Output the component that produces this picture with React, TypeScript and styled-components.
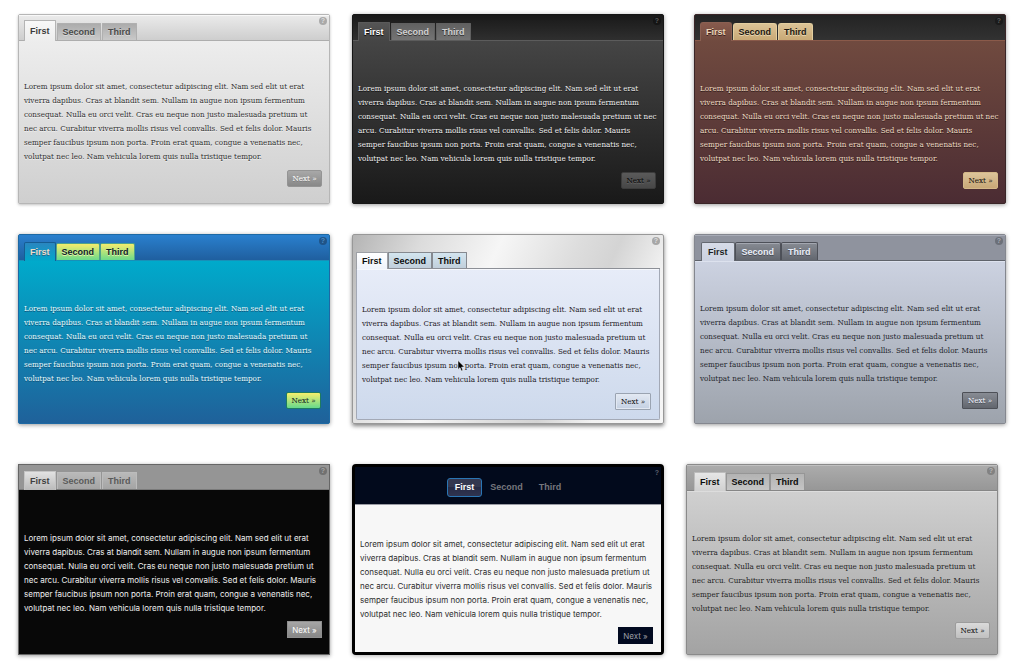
import React, { Fragment, useState } from "react";
import styled, { createGlobalStyle, css } from "styled-components";

const SERIF = `8px/14px "DejaVu Serif Condensed", Georgia, serif`;
const SANS = `8px/14px Inter, Arial, sans-serif`;
const LABEL = `"Liberation Sans", Arial, sans-serif`;

interface Skin {
  name: string;
  frame: string;
  frameBorder: string;
  frameWidth?: number;
  framePad?: number;
  radius: number;
  shadow: string;
  header: string;
  headerHeight: number;
  headerLine: string;
  headerInset?: string;
  centered?: boolean;
  body: string;
  bodyFrame?: string;
  bodyInset?: string;
  bodyTop: number;
  bodySide: number;
  bodyEnd: number;
  bodyFont: string;
  text: string;
  textShadow?: string;
  wide?: boolean;
  tabsStart: number;
  tabGap: number;
  tabPad: number;
  tab: string;
  tabBorder: string;
  tabText: string;
  tabShadow?: string;
  tabInset?: string;
  tabRadius: number;
  tabHeight: number;
  active: string;
  activeBorder: string;
  activeText: string;
  activeShadow?: string;
  activeInset?: string;
  activeHeight: number;
  overlap: number;
  button: string;
  buttonBorder: string;
  buttonText: string;
  buttonShadow?: string;
  buttonInset?: string;
  buttonRadius: number;
  buttonWidth: number;
  help: string;
  helpText: string;
  helpEnd: number;
}

const base = {
  radius: 2,
  shadow: "0 1px 4px rgba(0, 0, 0, 0.4)",
  headerHeight: 26,
  bodyTop: 41,
  bodySide: 5,
  bodyEnd: 7,
  bodyFont: SERIF,
  tabsStart: 5,
  tabGap: 0,
  tabPad: 5,
  tabRadius: 1,
  tabHeight: 17,
  activeHeight: 19,
  overlap: 1,
  buttonRadius: 2,
  buttonWidth: 35,
  helpEnd: 2,
};

const skins: Skin[][] = [
  [
    {
      ...base,
      name: "Silver",
      shadow: "0 1px 3px rgba(0, 0, 0, 0.25)",
      frame: "#dddddd",
      frameBorder: "#b6b6b6",
      header: "linear-gradient(#ebebeb, #cecece)",
      headerLine: "#adadad",
      headerInset: "inset 0 1px 0 #f8f8f8",
      body: "linear-gradient(#ededed, #cfcfcf)",
      bodyTop: 39,
      text: "#303030",
      textShadow: "0 1px 0 rgba(255, 255, 255, 0.6)",
      tabGap: 1,
      tab: "linear-gradient(#acacac, #c9c9c9)",
      tabBorder: "#b0b0b0",
      tabText: "#4a4a4a",
      tabShadow: "0 1px 0 rgba(255, 255, 255, 0.4)",
      active: "linear-gradient(#f8f8f8, #ededed)",
      activeBorder: "#b4b4b4",
      activeText: "#3c3c3c",
      activeHeight: 21,
      button: "linear-gradient(#a8a8a8, #888888)",
      buttonBorder: "#949494",
      buttonText: "#ffffff",
      buttonShadow: "0 1px 0 rgba(0, 0, 0, 0.2)",
      help: "#a9a9a9",
      helpText: "#dedede",
    },
    {
      ...base,
      name: "Graphite",
      frame: "#222222",
      frameBorder: "#161616",
      header: "linear-gradient(#191919, #2f2f2f)",
      headerLine: "#5c5c5c",
      body: "linear-gradient(#454545, #191919)",
      text: "#f0f0f0",
      textShadow: "0 1px 0 #111111",
      wide: true,
      tabGap: 1,
      tab: "linear-gradient(#616161, #747474)",
      tabBorder: "#606060",
      tabText: "#d2d2d2",
      tabShadow: "0 1px 0 #333333",
      active: "linear-gradient(#555555, #454545)",
      activeBorder: "#5a5a5a",
      activeText: "#ffffff",
      activeShadow: "0 1px 1px #000000",
      button: "linear-gradient(#5a5a5a, #474747)",
      buttonBorder: "#3c3c3c",
      buttonText: "#060606",
      buttonShadow: "0 1px 0 #666666",
      help: "#151515",
      helpText: "#5a5a5a",
    },
    {
      ...base,
      name: "Mocha",
      frame: "#4b2c31",
      frameBorder: "#3a2527",
      header: "linear-gradient(#232323, #323232)",
      headerLine: "#8a5a4a",
      body: "linear-gradient(#704a3f, #4b2c33)",
      text: "#eeddc4",
      textShadow: "0 1px 0 #2e1a1a",
      wide: true,
      tabGap: 1,
      tabRadius: 3,
      tab: "linear-gradient(#dcc396, #c8a976)",
      tabBorder: "#e3ce9f",
      tabText: "#1c1610",
      tabShadow: "0 1px 0 #e8d8b5",
      active: "linear-gradient(#885b4d, #704a3f)",
      activeBorder: "#8a6052",
      activeText: "#ead6b8",
      activeShadow: "0 1px 0 #3a2020",
      button: "linear-gradient(#dcc49a, #c8a877)",
      buttonBorder: "#d4b888",
      buttonText: "#120e0a",
      help: "#1b1b1b",
      helpText: "#5c5c5c",
    },
  ],
  [
    {
      ...base,
      name: "Lagoon",
      frame: "#1e6399",
      frameBorder: "#1d69a4",
      header: "linear-gradient(#2a80ce, #1f5f9f)",
      headerLine: "#1890b8",
      body: "linear-gradient(#00aacb, #1f619a)",
      bodyEnd: 8,
      text: "#e8fafa",
      textShadow: "0 1px 0 #12557c",
      tabRadius: 2,
      tab: "linear-gradient(#f5ec6c, #6cda8a)",
      tabBorder: "#4fa18c",
      tabText: "#10222a",
      tabShadow: "0 1px 0 #e8f7b0",
      active: "linear-gradient(#2a86c0, #00a8ca)",
      activeBorder: "#165d92",
      activeText: "#f0dcc6",
      activeShadow: "0 1px 0 #22688c",
      button: "linear-gradient(#f6ef6c, #66d98c)",
      buttonBorder: "#1f7b60",
      buttonText: "#0a181e",
      help: "#1f5488",
      helpText: "#4d8cc4",
    },
    {
      ...base,
      name: "Brushed",
      frame:
        "linear-gradient(115deg, #b4b4b4 0%, #dcdcdc 18%, #f6f6f6 38%, #dddddd 58%, #d4d4d4 68%, #f2f2f2 82%, #f6f6f6 100%)",
      frameBorder: "#989898",
      framePad: 3,
      shadow: "0 2px 4px rgba(0, 0, 0, 0.5)",
      header: "transparent",
      headerHeight: 34,
      headerLine: "#8c8f96",
      body: "linear-gradient(#e7ecf8, #cdd9ec)",
      bodyFrame: "#a3a9b6",
      bodyInset: "inset 0 1px 0 #f6f8fd",
      bodyTop: 34,
      bodyEnd: 8,
      text: "#1e2026",
      tabsStart: 0,
      tabHeight: 16,
      activeHeight: 17,
      tab: "linear-gradient(#d3e5ef, #c1cfdb)",
      tabBorder: "#85898f",
      tabText: "#0c0c0c",
      active: "linear-gradient(#ffffff, #eff3fb)",
      activeBorder: "#9da0a6",
      activeText: "#0c0c0c",
      button: "linear-gradient(#e3e9f3, #c4d0e2)",
      buttonBorder: "#9aa3b1",
      buttonInset: "inset 0 0 0 1px #e2e8f2",
      buttonText: "#0c0c0c",
      buttonRadius: 1,
      buttonWidth: 36,
      help: "#a7a7a7",
      helpText: "#dedede",
      helpEnd: 0,
    },
    {
      ...base,
      name: "Slate",
      frame: "#a5abb5",
      frameBorder: "#84878f",
      header: "#8f939e",
      headerInset: "inset 0 1px 0 #a7abb6",
      headerLine: "#5f636b",
      body: "linear-gradient(#ccd2e1, #9da3ac)",
      bodyInset: "inset 0 1px 0 #dde2ee",
      text: "#24262c",
      tabsStart: 6,
      tabPad: 6,
      tabRadius: 2,
      tabHeight: 18,
      tab: "linear-gradient(#878b93, #63676f)",
      tabBorder: "#4d5058",
      tabText: "#e9eef8",
      tabShadow: "0 1px 0 #4a4d55",
      tabInset: "inset 0 1px 0 #a3a7b0",
      active: "linear-gradient(#d6dbe8, #ccd2e1)",
      activeBorder: "#646870",
      activeText: "#1c1e22",
      button: "linear-gradient(#888c94, #62666e)",
      buttonBorder: "#4d5057",
      buttonText: "#f2f6ff",
      buttonShadow: "0 1px 0 #4a4d55",
      buttonRadius: 1,
      buttonWidth: 36,
      help: "#6c7079",
      helpText: "#a4a8b2",
    },
  ],
  [
    {
      ...base,
      name: "Noir",
      radius: 0,
      frame: "#080808",
      frameBorder: "#666666",
      header: "#959595",
      headerHeight: 25,
      headerLine: "#7a7a7a",
      body: "#080808",
      bodyFont: SANS,
      text: "#f0f0f0",
      tabGap: 1,
      tabRadius: 0,
      tab: "linear-gradient(#b9b9b9, #a4a4a4)",
      tabBorder: "#bcbcbc",
      tabText: "#5a5a5a",
      active: "linear-gradient(#e2e2e2, #bababa)",
      activeBorder: "#c4c4c4",
      activeText: "#404040",
      button: "linear-gradient(#a6a6a6, #878787)",
      buttonBorder: "#8f8f8f",
      buttonText: "#ffffff",
      buttonRadius: 0,
      help: "#717171",
      helpText: "#a5a5a5",
    },
    {
      ...base,
      name: "Midnight",
      radius: 4,
      frame: "#020a1c",
      frameBorder: "#000000",
      frameWidth: 3,
      shadow: "0 1px 4px rgba(0, 0, 0, 0.3)",
      header: "#020a1c",
      headerHeight: 38,
      headerLine: "#9a9ca4",
      centered: true,
      body: "#f7f7f7",
      bodyTop: 32,
      bodyEnd: 8,
      bodyFont: SANS,
      text: "#2c2c2c",
      tabsStart: 0,
      tabPad: 7,
      tabRadius: 3,
      tab: "transparent",
      tabBorder: "transparent",
      tabText: "#76777d",
      tabHeight: 19,
      active: "linear-gradient(#343850 50%, #272b45 50%, #2f3450)",
      activeBorder: "#2a76b4",
      activeText: "#ffffff",
      overlap: 0,
      button: "#020a20",
      buttonBorder: "#020a20",
      buttonText: "#9c9ea4",
      buttonRadius: 0,
      help: "#020a1c",
      helpText: "#5c606c",
      helpEnd: 0,
    },
    {
      ...base,
      name: "Pewter",
      frame: "#aaaaaa",
      frameBorder: "#8a8a8a",
      header: "linear-gradient(#acacac, #979797)",
      headerInset: "inset 0 1px 0 #c0c0c0",
      headerLine: "#868686",
      body: "linear-gradient(#d0d0d0, #a3a3a3)",
      bodyInset: "inset 0 1px 0 #dddddd",
      text: "#242424",
      tabsStart: 7,
      tab: "linear-gradient(#b3b3b3, #c5c5c5)",
      tabBorder: "#969696",
      tabText: "#0c0c0c",
      active: "linear-gradient(#e6e6e6, #d0d0d0)",
      activeBorder: "#bdbdbd",
      activeText: "#0c0c0c",
      button: "linear-gradient(#dadada, #c0c0c0)",
      buttonBorder: "#9c9c9c",
      buttonText: "#0c0c0c",
      help: "#828282",
      helpText: "#b5b5b5",
    },
  ],
];

const Global = createGlobalStyle`
  * { box-sizing: border-box; }
  body { margin: 0; background: #ffffff; }
  button { margin: 0; cursor: pointer; }
`;

const Gallery = styled.main`
  display: flex;
  flex-direction: column;
  gap: 30px;
  padding: 14px 18px 12px;
`;

const Row = styled.div<{ $last: boolean }>`
  display: grid;
  grid-template-columns: repeat(3, minmax(0, 1fr));
  column-gap: 22px;
  padding-right: 8px;
  padding-top: ${(p) => (p.$last ? 10 : 0)}px;

  & > :last-child {
    margin: 0 ${(p) => (p.$last ? 0 : -8)}px 0 ${(p) => (p.$last ? 0 : 8)}px;
  }
`;

const Panel = styled.section<{ $s: Skin }>`
  position: relative;
  min-height: 190px;
  display: flex;
  flex-direction: column;
  padding: 0 ${(p) => p.$s.framePad ?? 0}px ${(p) => p.$s.framePad ?? 0}px;
  border: ${(p) => p.$s.frameWidth ?? 1}px solid ${(p) => p.$s.frameBorder};
  border-radius: ${(p) => p.$s.radius}px;
  background: ${(p) => p.$s.frame};
  box-shadow: ${(p) => p.$s.shadow};
`;

const Header = styled.header<{ $s: Skin }>`
  display: flex;
  align-items: flex-end;
  height: ${(p) => p.$s.headerHeight}px;
  background: ${(p) => p.$s.header};
  border-bottom: 1px solid ${(p) => p.$s.headerLine};
  box-shadow: ${(p) => p.$s.headerInset ?? "none"};
`;

const TabList = styled.div<{ $s: Skin }>`
  display: flex;
  gap: ${(p) => p.$s.tabGap}px;
  ${(p) =>
    p.$s.centered
      ? css`
          flex: 1;
          align-self: center;
          align-items: center;
          justify-content: center;
          padding: 3px 0 0 8px;
        `
      : css`
          align-items: flex-end;
          padding-left: ${p.$s.tabsStart}px;
        `}
`;

const Tab = styled.button<{ $s: Skin; $active: boolean }>`
  height: ${(p) => (p.$active ? p.$s.activeHeight : p.$s.tabHeight)}px;
  padding: 0 ${(p) => p.$s.tabPad}px;
  margin-bottom: ${(p) => (p.$active ? -p.$s.overlap : 0)}px;
  border: 1px solid ${(p) => (p.$active ? p.$s.activeBorder : p.$s.tabBorder)};
  border-bottom-width: ${(p) => (p.$s.centered ? 1 : 0)}px;
  border-radius: ${(p) => p.$s.tabRadius}px;
  ${(p) =>
    !p.$s.centered &&
    css`
      border-bottom-left-radius: 0;
      border-bottom-right-radius: 0;
    `}
  background: ${(p) => (p.$active ? p.$s.active : p.$s.tab)};
  box-shadow: ${(p) => (p.$active ? p.$s.activeInset : p.$s.tabInset) ?? "none"};
  color: ${(p) => (p.$active ? p.$s.activeText : p.$s.tabText)};
  text-shadow: ${(p) => (p.$active ? p.$s.activeShadow : p.$s.tabShadow) ?? "none"};
  font: bold 9px/14px ${LABEL};
`;

const Help = styled.button<{ $s: Skin }>`
  align-self: flex-start;
  flex: none;
  width: 8px;
  height: 8px;
  margin: 2px ${(p) => p.$s.helpEnd}px 0 auto;
  padding: 0;
  border: 0;
  border-radius: 4px;
  background: ${(p) => p.$s.help};
  color: ${(p) => p.$s.helpText};
  font: bold 7px/8px ${LABEL};
`;

const Body = styled.div<{ $s: Skin }>`
  flex: 1;
  display: flex;
  flex-direction: column;
  align-items: flex-start;
  gap: 6px;
  padding: ${(p) => p.$s.bodyTop}px ${(p) => p.$s.bodyEnd}px 8px ${(p) => p.$s.bodySide}px;
  background: ${(p) => p.$s.body};
  border: 0 solid ${(p) => p.$s.bodyFrame ?? "transparent"};
  border-width: ${(p) => (p.$s.bodyFrame ? "0 1px 1px" : "0")};
  border-radius: 0 0 ${(p) => (p.$s.radius > 2 ? 0 : p.$s.radius)}px ${(p) => (p.$s.radius > 2 ? 0 : p.$s.radius)}px;
  box-shadow: ${(p) => p.$s.bodyInset ?? "none"};
`;

const Copy = styled.p<{ $s: Skin }>`
  margin: 0;
  white-space: nowrap;
  color: ${(p) => p.$s.text};
  text-shadow: ${(p) => p.$s.textShadow ?? "none"};
  font: ${(p) => p.$s.bodyFont};
`;

const Next = styled.button<{ $s: Skin }>`
  align-self: flex-end;
  min-width: ${(p) => p.$s.buttonWidth}px;
  height: 17px;
  padding: 0 3px;
  border: 1px solid ${(p) => p.$s.buttonBorder};
  border-radius: ${(p) => p.$s.buttonRadius}px;
  background: ${(p) => p.$s.button};
  box-shadow: ${(p) => p.$s.buttonInset ?? "none"};
  color: ${(p) => p.$s.buttonText};
  text-shadow: ${(p) => p.$s.buttonShadow ?? "none"};
  font: ${(p) => p.$s.bodyFont};
`;

const Pointer = styled.svg`
  position: absolute;
  left: 104px;
  top: 125px;
  width: 8px;
  height: 12px;
`;

const tabs = ["First", "Second", "Third"];

const opening = [
  "Lorem ipsum dolor sit amet, consectetur adipiscing elit. Nam sed elit ut erat",
  "viverra dapibus. Cras at blandit sem. Nullam in augue non ipsum fermentum",
];
const closing = [
  "semper faucibus ipsum non porta. Proin erat quam, congue a venenatis nec,",
  "volutpat nec leo. Nam vehicula lorem quis nulla tristique tempor.",
];
const narrowLines = [
  ...opening,
  "consequat. Nulla eu orci velit. Cras eu neque non justo malesuada pretium ut",
  "nec arcu. Curabitur viverra mollis risus vel convallis. Sed et felis dolor. Mauris",
  ...closing,
];
const wideLines = [
  ...opening,
  "consequat. Nulla eu orci velit. Cras eu neque non justo malesuada pretium ut nec",
  "arcu. Curabitur viverra mollis risus vel convallis. Sed et felis dolor. Mauris",
  ...closing,
];

function TabPanel({ skin }: { skin: Skin }) {
  const [current, setCurrent] = useState(0);
  const lines = skin.wide ? wideLines : narrowLines;
  return (
    <Panel $s={skin}>
      <Header $s={skin}>
        <TabList $s={skin} role="tablist">
          {tabs.map((label, i) => (
            <Tab
              key={label}
              type="button"
              role="tab"
              aria-selected={i === current}
              $s={skin}
              $active={i === current}
              onClick={() => setCurrent(i)}
            >
              {label}
            </Tab>
          ))}
        </TabList>
        <Help type="button" $s={skin}>
          ?
        </Help>
      </Header>
      <Body $s={skin} role="tabpanel">
        <Copy $s={skin}>
          {lines.map((line, i) => (
            <Fragment key={line}>
              {i > 0 && <br />}
              {line}
            </Fragment>
          ))}
        </Copy>
        <Next type="button" $s={skin} onClick={() => setCurrent((current + 1) % tabs.length)}>
          Next »
        </Next>
      </Body>
      {skin.name === "Brushed" && (
        <Pointer viewBox="0 0 8 12" aria-hidden="true">
          <path
            d="M1 0.5 L1 9.5 L3 7.6 L4.4 11 L5.9 10.3 L4.5 7.1 L7.4 7 Z"
            fill="#000000"
            stroke="#ffffff"
            strokeWidth="0.5"
          />
        </Pointer>
      )}
    </Panel>
  );
}

export default function App() {
  return (
    <>
      <Global />
      <Gallery>
        {skins.map((row, i) => (
          <Row key={i} $last={i === skins.length - 1}>
            {row.map((skin) => (
              <TabPanel key={skin.name} skin={skin} />
            ))}
          </Row>
        ))}
      </Gallery>
    </>
  );
}
